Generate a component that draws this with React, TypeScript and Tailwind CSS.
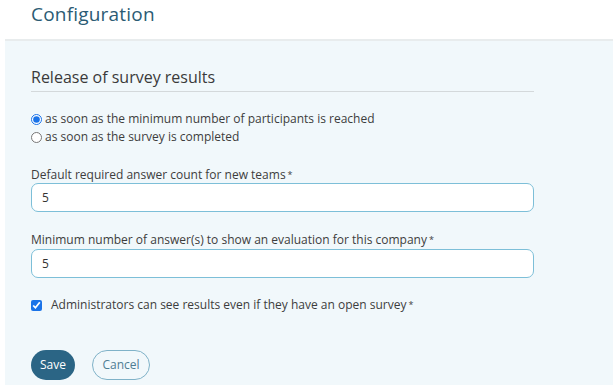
import { useState } from 'react';

export default function App() {
  const [release, setRelease] = useState('minimum');
  const [teamCount, setTeamCount] = useState('5');
  const [companyCount, setCompanyCount] = useState('5');
  const [adminSee, setAdminSee] = useState(true);

  return (
    <div
      className="w-[613px] h-[385px] bg-white pl-[5px] flex flex-col overflow-hidden"
      style={{ fontFamily: '"Open Sans", Arial, sans-serif' }}
    >
      <div className="h-[39px] shrink-0 pl-[26px] flex items-start">
        <h1 className="text-[19px] leading-[28px] text-[#2b5b74] tracking-[0.2px]">Configuration</h1>
      </div>
      <div className="flex-1 bg-[#f1f8fb] border-t-2 border-[#e8eced] pl-[26px] pr-[79px] pt-[25px]">
        <h2 className="text-[16px] leading-[22px] text-[#3a3a3a] pb-[3px] border-b border-[#d4d9db]">
          Release of survey results
        </h2>

        <div className="mt-[18px] flex flex-col text-[12px] leading-[18px] text-[#3d3d3d]">
          <label className="flex items-center gap-[3px]">
            <input
              type="radio"
              name="release"
              checked={release === 'minimum'}
              onChange={() => setRelease('minimum')}
              className="w-[11px] h-[11px] m-0 accent-[#1a73e8]"
            />
            as soon as the minimum number of participants is reached
          </label>
          <label className="flex items-center gap-[3px]">
            <input
              type="radio"
              name="release"
              checked={release === 'completed'}
              onChange={() => setRelease('completed')}
              className="w-[11px] h-[11px] m-0 accent-[#1a73e8]"
            />
            as soon as the survey is completed
          </label>
        </div>

        <label className="block mt-[21px] text-[12px] leading-[16px] text-[#3d3d3d]">
          Default required answer count for new teams<span className="text-[9px] align-top ml-[2px]">*</span>
        </label>
        <input
          type="text"
          value={teamCount}
          onChange={(e) => setTeamCount(e.target.value)}
          className="w-full h-[29px] px-[10px] bg-white border border-[#7dbfd8] rounded-[7px] text-[12px] text-[#333] outline-none"
        />

        <label className="block mt-[20px] text-[12px] leading-[16px] text-[#3d3d3d]">
          Minimum number of answer(s) to show an evaluation for this company<span className="text-[9px] align-top ml-[2px]">*</span>
        </label>
        <input
          type="text"
          value={companyCount}
          onChange={(e) => setCompanyCount(e.target.value)}
          className="mt-[1px] w-full h-[29px] px-[10px] bg-white border border-[#7dbfd8] rounded-[7px] text-[12px] text-[#333] outline-none"
        />

        <label className="mt-[18px] flex items-center gap-[9px] text-[12px] leading-[18px] text-[#3d3d3d]">
          <input
            type="checkbox"
            checked={adminSee}
            onChange={(e) => setAdminSee(e.target.checked)}
            className="w-[11px] h-[11px] m-0 accent-[#1a73e8]"
          />
          <span>
            Administrators can see results even if they have an open survey<span className="text-[9px] align-top ml-[2px]">*</span>
          </span>
        </label>

        <div className="mt-[36px] flex items-center gap-[17px]">
          <button className="h-[30px] w-[44px] rounded-full bg-[#2b6585] text-white text-[12px]">Save</button>
          <button className="h-[30px] w-[58px] rounded-full border border-[#7fb2c8] text-[#4e7d93] text-[12px] bg-transparent">
            Cancel
          </button>
        </div>
      </div>
    </div>
  );
}
